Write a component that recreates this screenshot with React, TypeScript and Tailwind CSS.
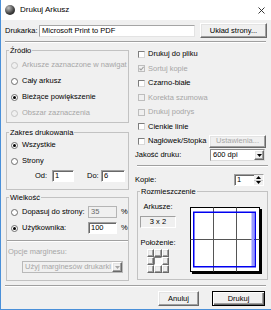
import React from "react";

type Opt = { label: string; checked?: boolean; disabled?: boolean };

const raised =
  "border border-t-white border-l-white border-r-[#696969] border-b-[#696969] bg-[#f0f0f0] shadow-[inset_-1px_-1px_0_#a0a0a0,inset_1px_1px_0_#e3e3e3]";
const sunken =
  "border border-t-[#a0a0a0] border-l-[#a0a0a0] border-r-white border-b-white shadow-[inset_1px_1px_0_#696969]";

function Radio({ label, checked, disabled }: Opt) {
  return (
    <div className="flex h-[16px] items-center pl-[4px]">
      <span
        className={`flex h-[7px] w-[7px] items-center justify-center rounded-full border ${
          disabled ? "border-[#c4c4c4] bg-[#f0f0f0]" : "border-[#6d6d6d] bg-white"
        }`}
      >
        {checked && <span className="h-[3px] w-[3px] rounded-full bg-black" />}
      </span>
      <span className={`ml-[4px] ${disabled ? "text-[#a6a6a6]" : "text-black"}`}>{label}</span>
    </div>
  );
}

function Check({ label, checked, disabled }: Opt) {
  return (
    <div className="flex h-[14.5px] items-center pl-[3px]">
      <span
        className={`flex h-[7px] w-[7px] items-center justify-center border ${
          disabled
            ? "border-[#bdbdbd] bg-[#f0f0f0]"
            : "border-[#7d7d7d] border-b-[#d8d8d8] border-r-[#d8d8d8] bg-white"
        }`}
      >
        {checked && (
          <svg width="5" height="5" viewBox="0 0 5 5">
            <path d="M0.5 2.5L2 4L4.6 0.8" fill="none" stroke="#a0a0a0" strokeWidth="1.1" />
          </svg>
        )}
      </span>
      <span className={`ml-[3px] ${disabled ? "text-[#a6a6a6]" : "text-black"}`}>{label}</span>
    </div>
  );
}

function Group({
  title,
  className,
  children,
}: {
  title: string;
  className: string;
  children: React.ReactNode;
}) {
  return (
    <fieldset className={`border border-[#c2c2c2] ${className}`}>
      <legend className="ml-[2px] px-[1px] leading-[9px]">{title}</legend>
      {children}
    </fieldset>
  );
}

function Etched({ className }: { className: string }) {
  return <div className={`border-t border-b border-t-[#a0a0a0] border-b-white ${className}`} />;
}

function Tri({ up, color = "#000" }: { up?: boolean; color?: string }) {
  return (
    <svg width="5" height="3" viewBox="0 0 5 3">
      <path d={up ? "M0 3L2.5 0L5 3Z" : "M0 0L5 0L2.5 3Z"} fill={color} />
    </svg>
  );
}

function Dropdown({ value, disabled, className }: { value: string; disabled?: boolean; className: string }) {
  return (
    <div
      className={`flex h-[12px] items-stretch border ${
        disabled ? "border-[#b9b9b9] bg-[#f0f0f0] text-[#a6a6a6]" : "border-[#8a8a8a] border-b-[#dcdcdc] border-r-[#dcdcdc] bg-white"
      } ${className}`}
    >
      <span className="flex-1 truncate pl-[2px] leading-[10px]">{value}</span>
      <span className={`${raised} flex w-[10px] items-center justify-center`}>
        <Tri color={disabled ? "#a6a6a6" : "#000"} />
      </span>
    </div>
  );
}

function Input({ value, className }: { value: string; className: string }) {
  return (
    <div className={`${sunken} h-[12px] bg-white pl-[2px] leading-[10px] ${className}`}>{value}</div>
  );
}

export default function App() {
  return (
    <div className="flex h-[310px] w-[271px] flex-col border-b border-l border-[#4a90d9] bg-[#f0f0f0] font-['Liberation_Sans',Arial,sans-serif] text-[7.5px] leading-[10px] text-black">
      {/* title bar */}
      <div className="flex h-[20px] shrink-0 items-center bg-white pl-[4px] pr-[6px]">
        <span className="h-[10px] w-[10px] rounded-full bg-[radial-gradient(circle_at_35%_30%,#c0c0c0,#3c3c3c_60%,#161616)]" />
        <span className="ml-[5px] text-[8px]">Drukuj Arkusz</span>
        <svg className="ml-auto" width="7" height="7" viewBox="0 0 7 7">
          <path d="M0.5 0.5L6.5 6.5M6.5 0.5L0.5 6.5" stroke="#222" strokeWidth="0.9" />
        </svg>
      </div>

      <div className="flex flex-1 flex-col pl-[4px] pr-[3px]">
        {/* printer */}
        <div className="mt-[3px] flex h-[15px] items-center">
          <span className="w-[34px]">Drukarka:</span>
          <div className="flex h-[12px] w-[156px] items-center border border-[#a5a5a5] border-b-[#e3e3e3] border-r-[#e3e3e3] bg-white pl-[2px]">
            Microsoft Print to PDF
          </div>
          <button className={`${raised} ml-[5px] h-[15px] w-[67px]`}>Układ strony...</button>
        </div>

        <Etched className="mt-[3px] mr-[2px]" />

        <div className="mt-[3px] flex pl-[1px]">
          {/* left column */}
          <div className="flex w-[123px] flex-col">
            <Group title="Źródło" className="h-[77px]">
              <div className="pt-[2px]">
                <Radio label="Arkusze zaznaczone w nawigat" disabled />
                <Radio label="Cały arkusz" />
                <Radio label="Bieżące powiększenie" checked />
                <Radio label="Obszar zaznaczenia" disabled />
              </div>
            </Group>

            <Group title="Zakres drukowania" className="mt-[5px] h-[62px]">
              <Radio label="Wszystkie" checked />
              <Radio label="Strony" />
              <div className="mt-[1px] flex h-[12px] items-center pl-[28px]">
                <span className="w-[17px]">Od:</span>
                <Input value="1" className="w-[22px]" />
                <span className="ml-[13px] w-[14px]">Do:</span>
                <Input value="6" className="w-[24px]" />
              </div>
            </Group>

            <Group title="Wielkość" className="mt-[3px] h-[88px]">
              <div className="mt-[2px] flex h-[16px] items-center">
                <Radio label="Dopasuj do strony:" />
                <div className="ml-auto h-[12px] w-[29px] border border-[#b5b5b5] bg-[#f0f0f0] pl-[2px] leading-[10px] text-[#6a6a6a]">
                  35
                </div>
                <span className="ml-[4px] w-[7px]">%</span>
              </div>
              <div className="flex h-[16px] items-center">
                <Radio label="Użytkownika:" checked />
                <Input value="100" className="ml-auto w-[29px]" />
                <span className="ml-[4px] w-[7px]">%</span>
              </div>
              <Etched className="mt-[4px]" />
              <div className="mt-[5px] pl-[1px] text-[#a6a6a6]">Opcje marginesu:</div>
              <Dropdown value="Użyj marginesów drukarki" disabled className="mt-[4px] ml-[15px] w-[101px]" />
            </Group>
          </div>

          {/* right column */}
          <div className="ml-[6px] flex flex-1 flex-col pt-[1px]">
            <Check label="Drukuj do pliku" />
            <Check label="Sortuj kopie" checked disabled />
            <Check label="Czarno-białe" />
            <Check label="Korekta szumowa" disabled />
            <Check label="Drukuj podrys" disabled />
            <Check label="Cienkie linie" />
            <div className="flex h-[14.5px] items-center">
              <Check label="Nagłówek/Stopka" />
              <button className={`${raised} ml-auto mr-[2px] h-[13px] w-[57px] text-[#a6a6a6]`}>Ustawienia...</button>
            </div>

            <div className="mt-[0.5px] flex h-[12px] items-center">
              <span>Jakość druku:</span>
              <Dropdown value="600 dpi" className="ml-auto mr-[3px] w-[55px]" />
            </div>

            <Etched className="mt-[4px] ml-[2px]" />

            <div className="mt-[7px] flex h-[12px] items-center">
              <span>Kopie:</span>
              <div className={`${sunken} ml-auto mr-[4px] flex h-[12px] w-[30px] bg-white`}>
                <span className="flex-1 pl-[2px] leading-[10px]">1</span>
                <div className="flex w-[9px] flex-col">
                  <span className="flex flex-1 items-center justify-center border-b border-[#c8c8c8] bg-[#f0f0f0]">
                    <Tri up />
                  </span>
                  <span className="flex flex-1 items-center justify-center bg-[#f0f0f0]">
                    <Tri />
                  </span>
                </div>
              </div>
            </div>

            <Group title="Rozmieszczenie" className="mt-[1px] ml-[2px] h-[93px]">
              <div className="flex pl-[2px]">
                <div className="mt-[6px] flex w-[36px] flex-col items-center">
                  <span>Arkusze:</span>
                  <div className="mt-[4px] flex h-[12px] w-[36px] items-center justify-center border border-t-[#a0a0a0] border-l-[#a0a0a0] border-r-white border-b-white">
                    3 x 2
                  </div>
                  <span className="mt-[10px]">Położenie:</span>
                  <div className="mt-[1px] grid h-[24px] w-[22px] grid-cols-3">
                    {[0, 1, 2, 3, 4, 5, 6, 7, 8].map((i) => (
                      <span
                        key={i}
                        className={
                          i === 4
                            ? "border border-t-[#808080] border-l-[#808080] border-r-white border-b-white bg-[#fafafa]"
                            : raised
                        }
                      />
                    ))}
                  </div>
                </div>
                <svg className="mt-[11px] ml-[14px]" width="72" height="67" viewBox="0 0 72 67">
                  <rect x="2" y="2" width="70" height="65" fill="#000" />
                  <rect x="0.5" y="0.5" width="69" height="64" fill="#fff" stroke="#000" />
                  <path d="M23.5 0.5V64.5M46.5 0.5V64.5M0.5 32.5H69.5" stroke="#555" />
                  <rect x="61.5" y="5.5" width="2.5" height="54" fill="#9a9aff" />
                  <rect x="3.75" y="5.25" width="61.5" height="54.5" fill="none" stroke="#0000f0" strokeWidth="1.5" />
                </svg>
              </div>
            </Group>
          </div>
        </div>

        <Etched className="mt-[4px] mr-[2px]" />

        <div className="mt-[4px] flex justify-end pr-[3px]">
          <button className={`${raised} h-[15px] w-[41px]`}>Anuluj</button>
          <button className="ml-[13px] h-[15px] w-[53px] border border-black bg-[#f0f0f0] shadow-[inset_1px_1px_0_#fff,inset_-1px_-1px_0_#696969,inset_-2px_-2px_0_#a0a0a0]">
            Drukuj
          </button>
        </div>
      </div>
    </div>
  );
}
